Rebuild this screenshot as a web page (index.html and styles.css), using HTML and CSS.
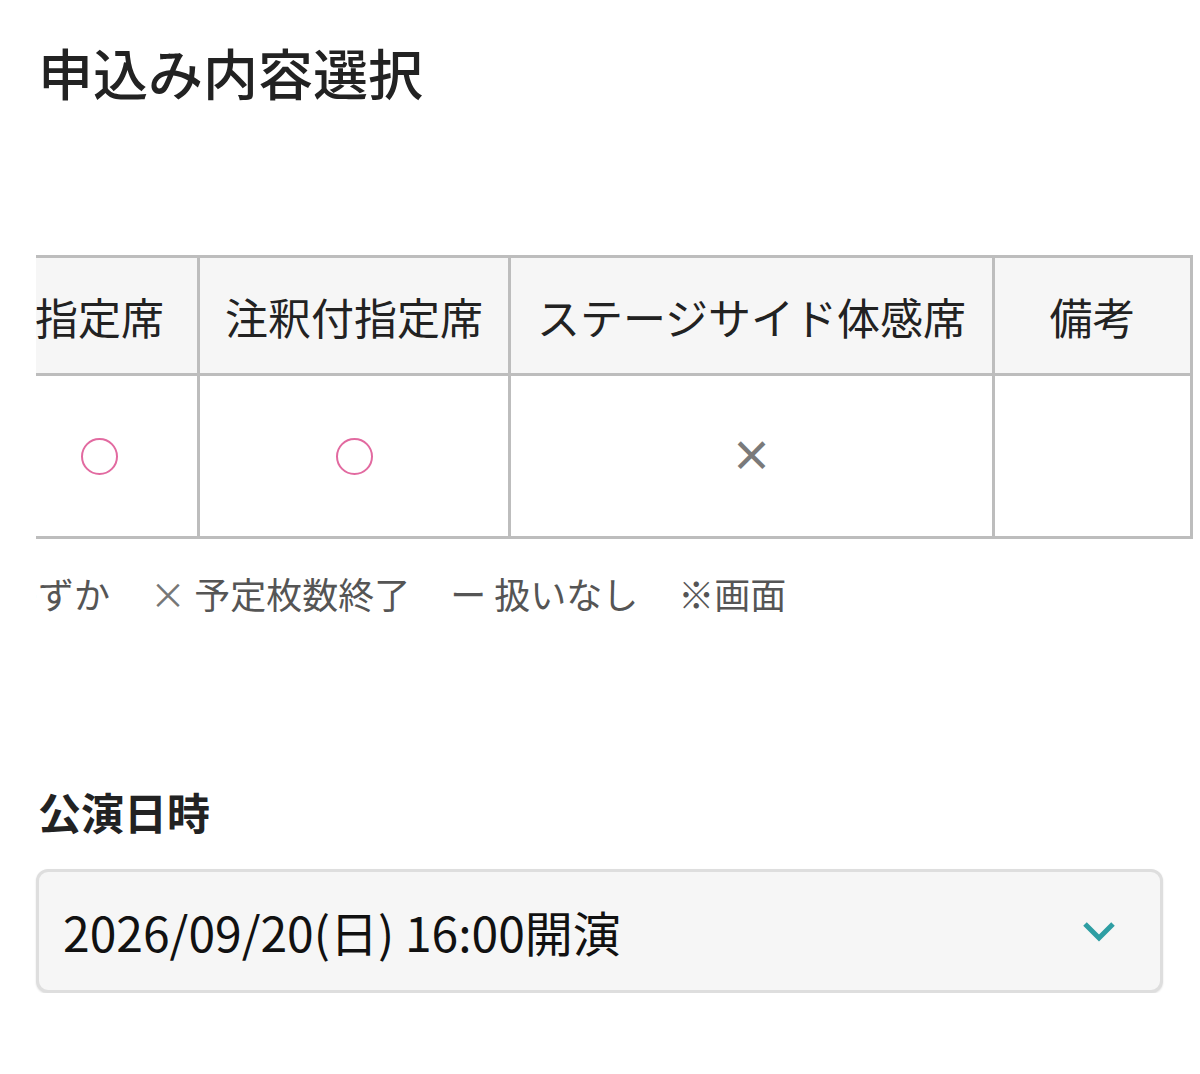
FILE: index.html
```html
<!DOCTYPE html>
<html lang="ja">
<head>
    <meta charset="UTF-8">
    <meta name="viewport" content="width=device-width, initial-scale=1.0">
    <title>申込み内容選択</title>
    <link rel="stylesheet" href="styles.css">
</head>
<body>
    <h1 class="page-title">申込み内容選択</h1>

    <!-- 席種ごとの受付状況（横スクロール） -->
    <div class="seat-scroll">
        <table class="seat-table">
            <thead>
                <tr>
                    <th class="col-a">指定席</th>
                    <th class="col-b">注釈付指定席</th>
                    <th class="col-c">ステージサイド体感席</th>
                    <th class="col-d">備考</th>
                </tr>
            </thead>
            <tbody>
                <tr>
                    <td><span class="mark-ok" role="img" aria-label="○"></span></td>
                    <td><span class="mark-ok" role="img" aria-label="○"></span></td>
                    <td><span class="mark-ng">×</span></td>
                    <td></td>
                </tr>
            </tbody>
        </table>
        <ul class="legend">
            <li>○ 残りわずか</li>
            <li><span class="legend-mark">×</span> 予定枚数終了</li>
            <li>ー 扱いなし</li>
            <li>※画面</li>
        </ul>
    </div>

    <h2 class="field-label">公演日時</h2>
    <div class="select-box">
        <span class="select-value">2026/09/20(日) 16:00開演</span>
        <svg class="chevron" width="34" height="22" viewBox="0 0 34 22">
            <polyline points="3,4 17,18 31,4" fill="none" stroke="#2e9ea3" stroke-width="5"/>
        </svg>
    </div>
</body>
</html>
```

FILE: styles.css
```css
body {
    margin: 0;
    padding: 0 36px;
    font-family: "Noto Sans CJK JP", "Noto Sans", sans-serif;
    color: #222;
    background: #fff;
}
.page-title {
    margin: 32px 0 0 2px;
    font-size: 55px;
    font-weight: 500;
    line-height: 78px;
}
.seat-scroll {
    margin-top: 145px;
    margin-right: -36px;
    overflow: hidden;
}
.seat-table {
    margin-left: -37px;
    border-collapse: collapse;
    table-layout: fixed;
}
.seat-table th,
.seat-table td {
    border: 3px solid #bdbdbd;
    text-align: center;
    padding: 0;
}
.seat-table th {
    height: 115px;
    background: #f6f6f6;
    font-size: 43px;
    font-weight: 400;
    color: #222;
    white-space: nowrap;
}
.seat-table td {
    height: 160px;
}
.col-a { width: 195px; }
.col-b { width: 308px; }
.col-c { width: 481px; }
.col-d { width: 195px; }
.mark-ok {
    display: inline-block;
    width: 33px;
    height: 33px;
    border: 2px solid #e26aa0;
    border-radius: 50%;
    vertical-align: middle;
}
.mark-ng {
    display: inline-block;
    margin-bottom: 6px;
    font-size: 42px;
    line-height: 50px;
    color: #7a7a7a;
    font-weight: 700;
}
.legend {
    list-style: none;
    display: flex;
    gap: 40px;
    margin: 30px 0 0 -150px;
    padding: 0;
    font-size: 36px;
    line-height: 48px;
    color: #555;
    white-space: nowrap;
}
.legend-mark {
    color: #777;
}
.field-label {
    margin: 166px 0 0 2px;
    font-size: 43px;
    font-weight: 700;
    line-height: 56px;
}
.select-box {
    display: flex;
    align-items: center;
    justify-content: space-between;
    box-sizing: border-box;
    height: 124px;
    margin: 30px 1px 0 0;
    padding: 0 44px 0 24px;
    background: #f6f6f6;
    border: 3px solid #dedede;
    border-radius: 12px;
    box-shadow: 0 1px 2px rgba(0, 0, 0, 0.12);
}
.select-value {
    font-size: 48px;
    color: #111;
}
.chevron {
    display: block;
}
```
